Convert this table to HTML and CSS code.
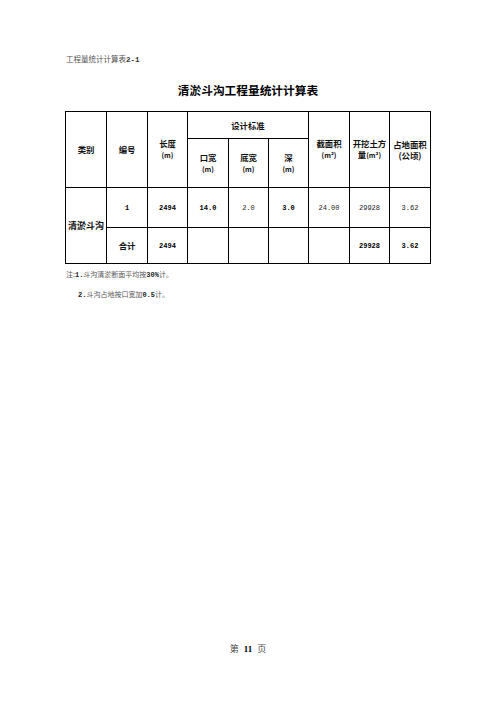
FILE: index.html
```html
<!DOCTYPE html>
<html lang="zh">
<head>
<meta charset="utf-8">
<link rel="stylesheet" href="styles.css">
</head>
<body>
<div class="page">
  <div class="caption">工程量统计计算表<span class="mono">2-1</span></div>
  <h1 class="title">清淤斗沟工程量统计计算表</h1>
  <table class="sheet">
    <colgroup>
      <col class="c41"><col class="c41"><col class="c40"><col class="c41"><col class="c40"><col class="c40"><col class="c41"><col class="c40"><col class="c41">
    </colgroup>
    <tr class="h1">
      <th rowspan="2">类别</th>
      <th rowspan="2">编号</th>
      <th rowspan="2">长度<br><span class="unit">(m)</span></th>
      <th colspan="3">设计标准</th>
      <th rowspan="2">截面积<br><span class="unit">(m²)</span></th>
      <th rowspan="2">开挖土方<br>量<span class="unit">(m²)</span></th>
      <th rowspan="2">占地面积<br>(公顷)</th>
    </tr>
    <tr class="h2">
      <th>口宽<br><span class="unit">(m)</span></th>
      <th>底宽<br><span class="unit">(m)</span></th>
      <th>深<br><span class="unit">(m)</span></th>
    </tr>
    <tr class="data">
      <th rowspan="2">清淤斗沟</th>
      <td class="b">1</td>
      <td class="b">2494</td>
      <td class="b">14.0</td>
      <td>2.0</td>
      <td class="b">3.0</td>
      <td>24.00</td>
      <td>29928</td>
      <td>3.62</td>
    </tr>
    <tr class="total">
      <th>合计</th>
      <td class="b">2494</td>
      <td></td>
      <td></td>
      <td></td>
      <td></td>
      <td class="b">29928</td>
      <td class="b">3.62</td>
    </tr>
  </table>
  <div class="notes">
    <p>注:<span class="mono b">1.</span>斗沟清淤断面平均按<span class="mono b">30%</span>计。</p>
    <p class="indent"><span class="mono b">2.</span>斗沟占地按口宽加<span class="mono b">0.5</span>计。</p>
  </div>
  <div class="footer"><span>第</span><span class="num">11</span><span>页</span></div>
</div>
</body>
</html>
```
FILE: styles.css
```css
html, body {
  margin: 0;
  padding: 0;
  background: #fff;
}
.page {
  width: 496px;
  height: 702px;
  position: relative;
  font-family: "Noto Sans CJK SC", "Noto Sans", sans-serif;
  color: #000;
}
.caption {
  padding: 54px 0 0 66px;
  font-size: 7.5px;
  line-height: 10px;
  color: #555;
}
.caption .mono {
  font-family: "Liberation Mono", monospace;
  font-weight: bold;
  color: #333;
}
.title {
  margin: 18px 0 0 0;
  text-align: center;
  font-size: 11.7px;
  line-height: 14px;
  font-weight: bold;
  letter-spacing: 0;
}
.sheet {
  margin: 14px 0 0 65px;
  border-collapse: collapse;
  table-layout: fixed;
  width: 366px;
}
.c41 { width: 41px; }
.c40 { width: 40px; }
.sheet th, .sheet td {
  border: 1px solid #000;
  padding: 0;
  text-align: center;
  vertical-align: middle;
}
.sheet th {
  font-size: 8.4px;
  line-height: 11px;
  font-weight: bold;
  color: #111;
}
.unit {
  font-size: 7px;
}
.sheet td {
  font-family: "Liberation Mono", monospace;
  font-size: 7px;
  color: #222;
}
.sheet td.b {
  font-weight: bold;
  color: #000;
}
.h1 { height: 27px; }
.h2 { height: 49px; }
.data { height: 40px; }
.total { height: 36px; }
.data th { font-size: 9px; }
.notes {
  margin: 5px 0 0 66px;
  font-size: 7px;
  color: #555;
}
.notes p {
  margin: 0 0 9px 0;
  line-height: 10px;
}
.notes .indent {
  padding-left: 12px;
}
.mono {
  font-family: "Liberation Mono", monospace;
}
.b {
  font-weight: bold;
  color: #222;
}
.footer {
  position: absolute;
  left: 0;
  right: 0;
  top: 643px;
  display: flex;
  justify-content: center;
  gap: 5px;
  font-family: "Noto Sans CJK SC", serif;
  font-size: 9px;
  line-height: 12px;
  color: #444;
}
.footer .num {
  font-family: "Liberation Serif", serif;
  font-weight: bold;
  color: #000;
}
```
